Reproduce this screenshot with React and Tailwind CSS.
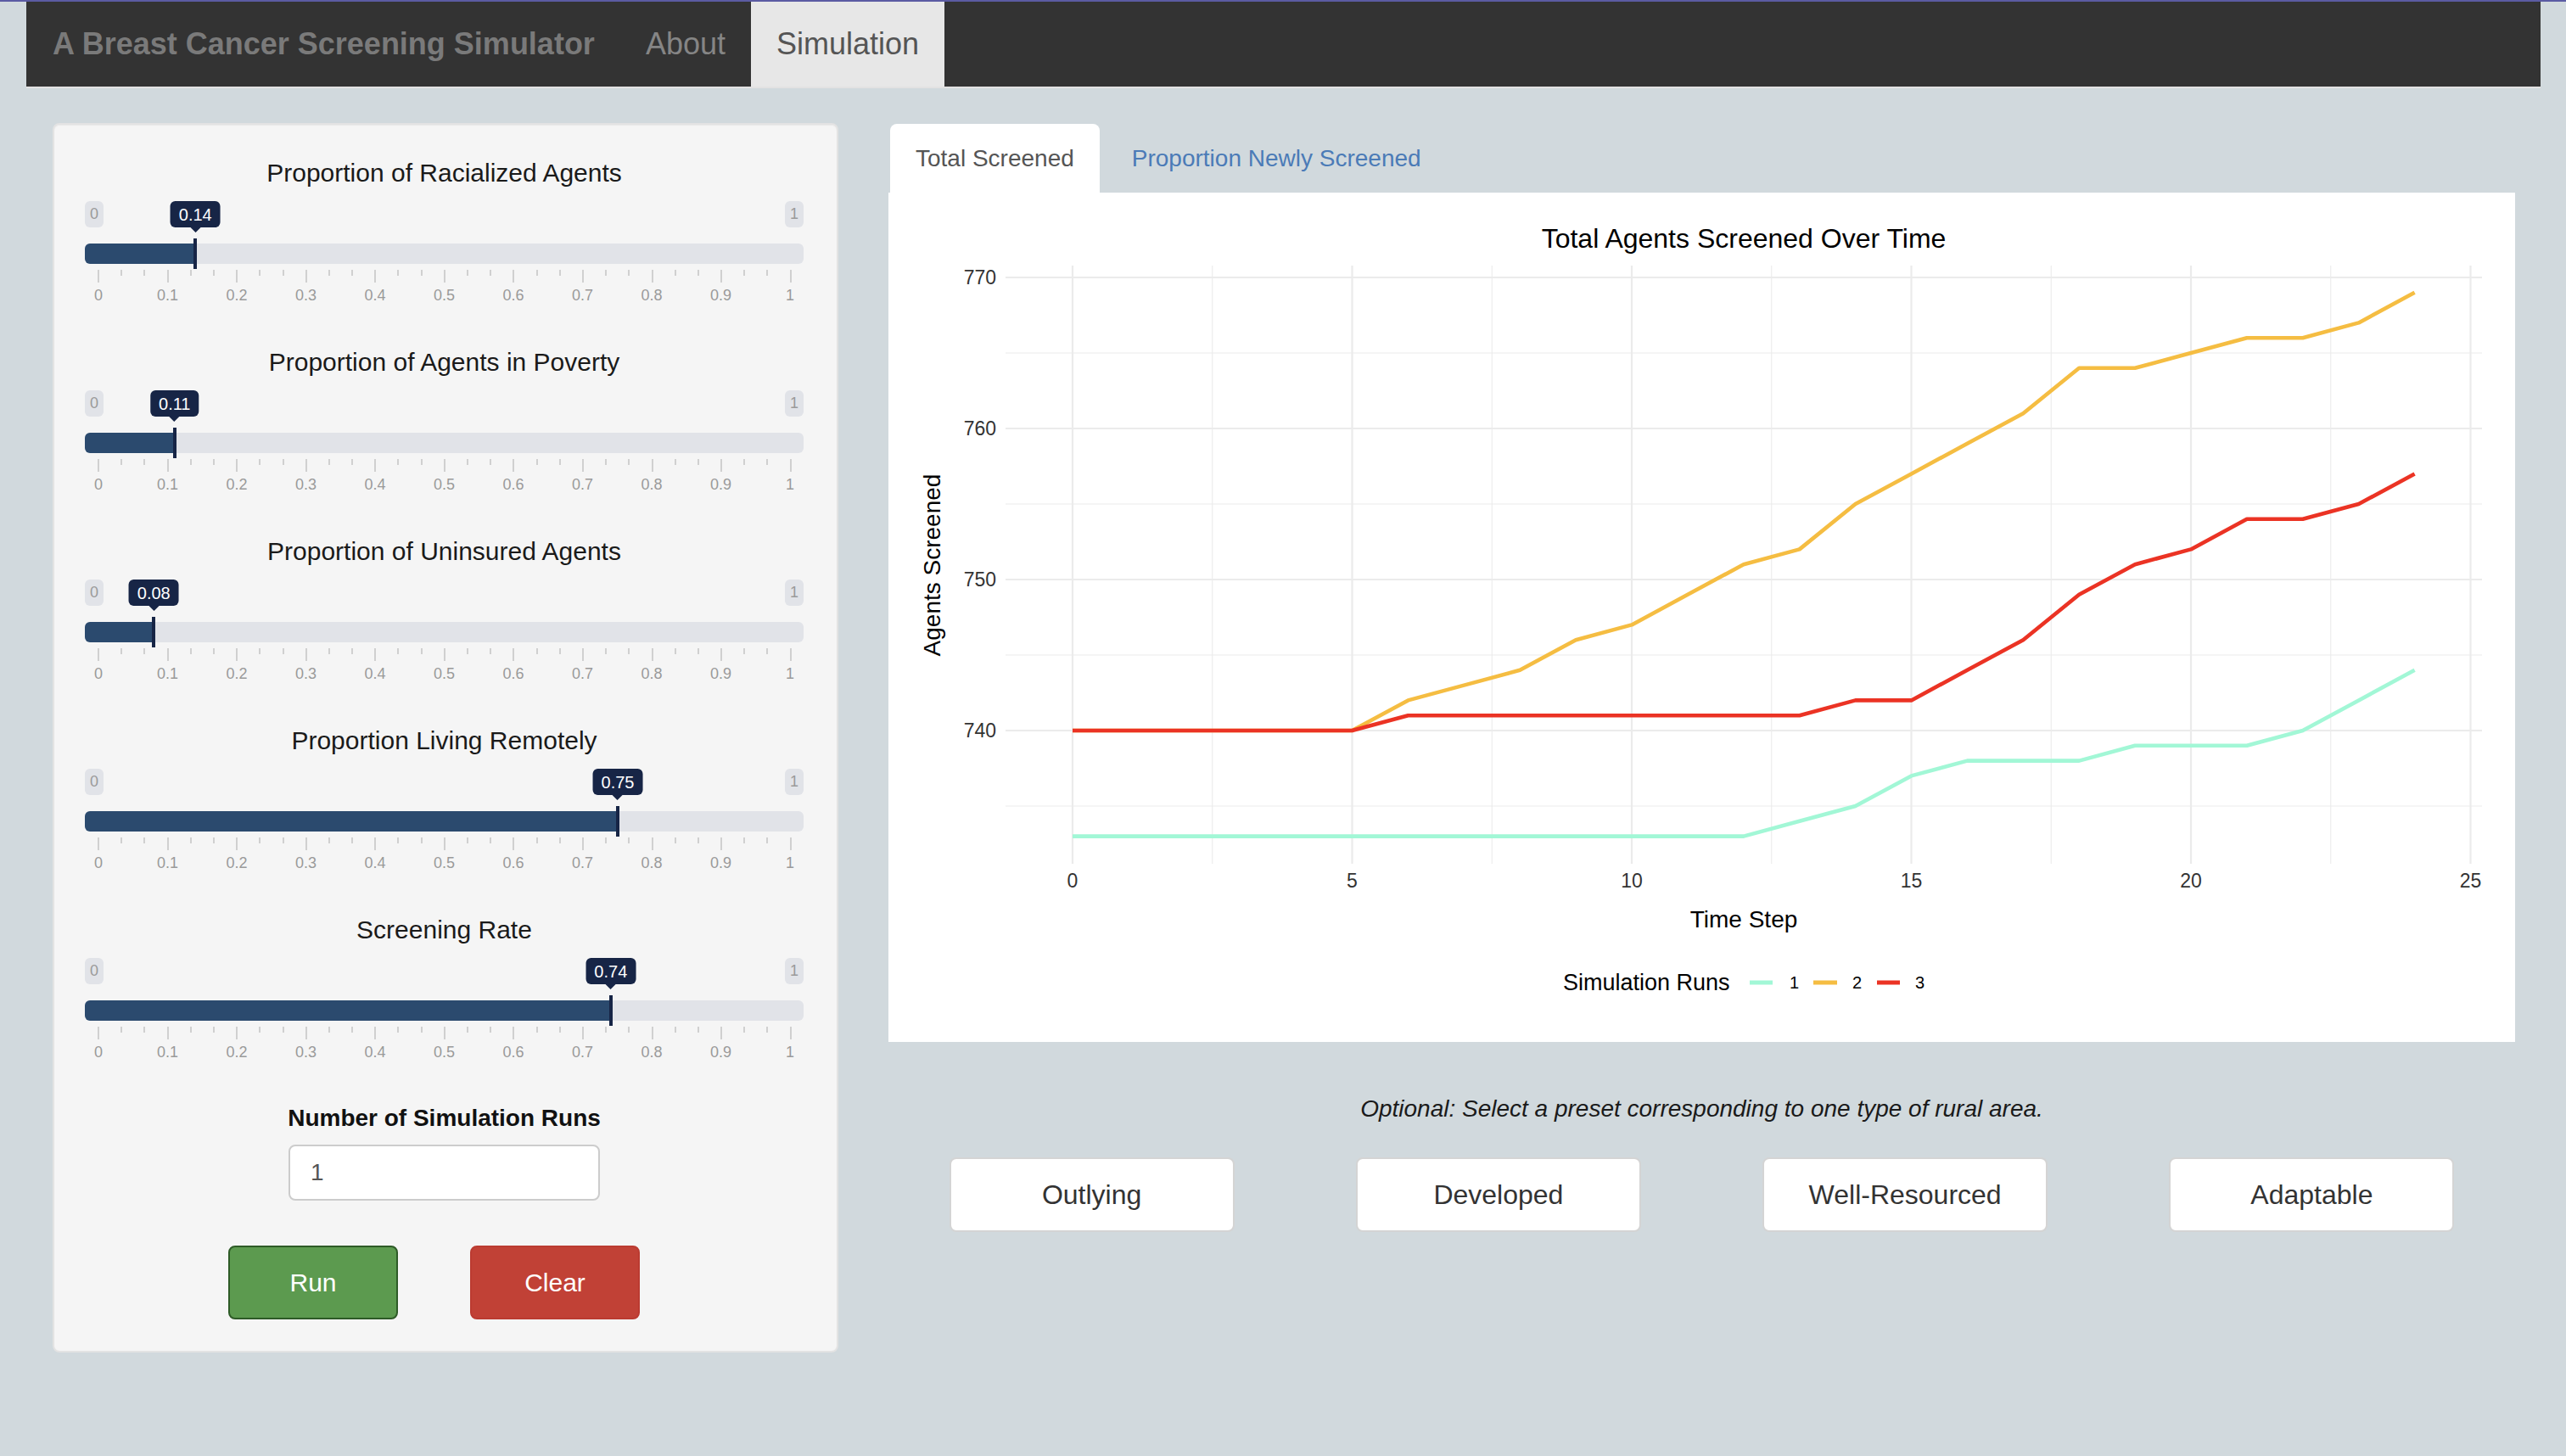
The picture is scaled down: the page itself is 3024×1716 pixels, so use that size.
import React from "react";

const sliders = [
  { title: "Proportion of Racialized Agents", value: 0.14 },
  { title: "Proportion of Agents in Poverty", value: 0.11 },
  { title: "Proportion of Uninsured Agents", value: 0.08 },
  { title: "Proportion Living Remotely", value: 0.75 },
  { title: "Screening Rate", value: 0.74 },
];

const gridLabels = ["0", "0.1", "0.2", "0.3", "0.4", "0.5", "0.6", "0.7", "0.8", "0.9", "1"];

function Slider({ title, value }) {
  const x = 16 + value * 816;
  return (
    <div className="mb-[51px]">
      <div className="text-center text-[30px] leading-[36px] text-[#1a1a1a]">{title}</div>
      <div className="relative mt-[15px] flex h-[31px] justify-between">
        <div className="flex h-[31px] items-center rounded-[6px] bg-[#e1e3e8] px-[6px] text-[18px] text-[#9a9a9a]">0</div>
        <div className="flex h-[31px] items-center rounded-[6px] bg-[#e1e3e8] px-[6px] text-[18px] text-[#9a9a9a]">1</div>
        <div
          className="absolute top-0 flex h-[31px] -translate-x-1/2 items-center rounded-[6px] bg-[#172546] px-[10px] text-[20px] text-white"
          style={{ left: x }}
        >
          {value.toFixed(2).replace(/0$/, "")}
          <div className="absolute left-1/2 top-full h-0 w-0 -translate-x-1/2 border-x-[6px] border-t-[6px] border-x-transparent border-t-[#172546]" />
        </div>
      </div>
      <div className="relative mt-[19px] h-[24px] rounded-[6px] bg-[#e1e3e8]">
        <div className="h-[24px] rounded-l-[6px] bg-[#2b4a6e]" style={{ width: x }} />
        <div className="absolute top-[-6px] h-[36px] w-[4px] bg-[#172546]" style={{ left: x - 2 }} />
      </div>
      <div className="mt-[7px] flex h-[15px] items-start justify-between pl-[15px] pr-[14px]">
        {Array.from({ length: 31 }).map((_, i) => (
          <div key={i} className={i % 3 === 0 ? "h-[15px] w-[2px] bg-[#d0d0d0]" : "h-[7px] w-[2px] bg-[#d0d0d0]"} />
        ))}
      </div>
      <div className="mt-[5px] flex h-[20px] justify-between px-[16px]">
        {gridLabels.map((l) => (
          <div key={l} className="flex w-0 justify-center">
            <span className="whitespace-nowrap text-[18px] leading-[20px] text-[#9a9a9a]">{l}</span>
          </div>
        ))}
      </div>
    </div>
  );
}

const xPos = (t) => 217 + 65.9 * t;
const yPos = (v) => 100 + (770 - v) * 17.8;

const teal = [733, 733, 733, 733, 733, 733, 733, 733, 733, 733, 733, 733, 733, 734, 735, 737, 738, 738, 738, 739, 739, 739, 740, 742, 744];
const yellow = [740, 740, 740, 740, 740, 740, 742, 743, 744, 746, 747, 749, 751, 752, 755, 757, 759, 761, 764, 764, 765, 766, 766, 767, 769];
const red = [740, 740, 740, 740, 740, 740, 741, 741, 741, 741, 741, 741, 741, 741, 742, 742, 744, 746, 749, 751, 752, 754, 754, 755, 757];

const pts = (arr) => arr.map((v, t) => `${xPos(t).toFixed(1)},${yPos(v).toFixed(1)}`).join(" ");

function Chart() {
  const majorY = [770, 760, 750, 740];
  const minorY = [765, 755, 745, 735];
  const majorX = [0, 5, 10, 15, 20, 25];
  const minorX = [2.5, 7.5, 12.5, 17.5, 22.5];
  return (
    <svg viewBox="0 0 1917 1001" className="block h-[1001px] w-full" fontFamily="'Liberation Sans', Arial, sans-serif">
      {minorY.map((v) => (
        <line key={"my" + v} x1={138} x2={1878} y1={yPos(v)} y2={yPos(v)} stroke="#ebebeb" strokeWidth={1.1} />
      ))}
      {minorX.map((t) => (
        <line key={"mx" + t} x1={xPos(t)} x2={xPos(t)} y1={86} y2={791} stroke="#ebebeb" strokeWidth={1.1} />
      ))}
      {majorY.map((v) => (
        <line key={"y" + v} x1={138} x2={1878} y1={yPos(v)} y2={yPos(v)} stroke="#ebebeb" strokeWidth={2.2} />
      ))}
      {majorX.map((t) => (
        <line key={"x" + t} x1={xPos(t)} x2={xPos(t)} y1={86} y2={791} stroke="#ebebeb" strokeWidth={2.2} />
      ))}
      <polyline points={pts(teal)} fill="none" stroke="#a2f7d6" strokeWidth={4.6} strokeLinejoin="round" />
      <polyline points={pts(yellow)} fill="none" stroke="#f5bd42" strokeWidth={4.6} strokeLinejoin="round" />
      <polyline points={pts(red)} fill="none" stroke="#eb3324" strokeWidth={4.6} strokeLinejoin="round" />
      <text x={1008} y={65} textAnchor="middle" fontSize={32} fill="#000">Total Agents Screened Over Time</text>
      {majorY.map((v) => (
        <text key={"ty" + v} x={127} y={yPos(v) + 8} textAnchor="end" fontSize={23} fill="#333">{v}</text>
      ))}
      {majorX.map((t) => (
        <text key={"tx" + t} x={xPos(t)} y={819} textAnchor="middle" fontSize={23} fill="#333">{t}</text>
      ))}
      <text x={1008} y={866} textAnchor="middle" fontSize={28} fill="#000">Time Step</text>
      <text transform="translate(61,439) rotate(-90)" textAnchor="middle" fontSize={28} fill="#000">Agents Screened</text>
      <text x={795} y={940} fontSize={27} fill="#000">Simulation Runs</text>
      <line x1={1015} x2={1042} y1={931} y2={931} stroke="#a2f7d6" strokeWidth={5} />
      <text x={1062} y={938} fontSize={20} fill="#000">1</text>
      <line x1={1090} x2={1118} y1={931} y2={931} stroke="#f5bd42" strokeWidth={5} />
      <text x={1136} y={938} fontSize={20} fill="#000">2</text>
      <line x1={1165} x2={1192} y1={931} y2={931} stroke="#eb3324" strokeWidth={5} />
      <text x={1210} y={938} fontSize={20} fill="#000">3</text>
    </svg>
  );
}

export default function App() {
  return (
    <div className="min-h-screen bg-[#d1d9dd] font-['Liberation_Sans',Arial,Helvetica,sans-serif]">
      <div className="h-[2px] bg-[#5b5ba3]" />
      <div className="pl-[31px] pr-[30px]">
        <nav className="flex h-[102px] border-b-2 border-[#e2e2e2] bg-[#333333]">
          <div className="flex items-center pl-[31px] pr-[30px] text-[36px] font-bold text-[#7a7a7a]">
            A Breast Cancer Screening Simulator
          </div>
          <div className="flex items-center px-[30px] text-[36px] text-[#858585]">About</div>
          <div className="flex items-center bg-[#e7e7e7] px-[30px] text-[36px] text-[#555555]">Simulation</div>
        </nav>
      </div>
      <div className="mt-[41px] flex gap-[59px] pl-[62px] pr-[60px]">
        <aside className="w-[926px] shrink-0 rounded-[8px] border-2 border-[#e3e3e3] bg-[#f5f5f5] pb-[37px] pl-[36px] pr-[39px] pt-[39px] shadow-[inset_0_1px_1px_rgba(0,0,0,0.05)]">
          {sliders.map((s) => (
            <Slider key={s.title} title={s.title} value={s.value} />
          ))}
          <div className="text-center text-[28px] font-bold leading-[34px] text-[#111]">Number of Simulation Runs</div>
          <div className="mt-[14px] flex justify-center">
            <div className="flex h-[66px] w-[367px] items-center rounded-[8px] border-2 border-[#cccccc] bg-white pl-[24px] text-[28px] text-[#555555]">
              1
            </div>
          </div>
          <div className="mt-[53px] flex justify-center gap-[85px] pr-[24px]">
            <button className="h-[87px] w-[200px] rounded-[8px] border-2 border-[#2e5b27] bg-[#5c9a4f] text-[30px] text-white">
              Run
            </button>
            <button className="h-[87px] w-[200px] rounded-[8px] border-2 border-[#bb3b31] bg-[#c14136] text-[30px] text-white">
              Clear
            </button>
          </div>
        </aside>
        <main className="min-w-0 flex-1 pt-[1px]">
          <div className="flex h-[81px] items-stretch">
            <div className="ml-[2px] flex items-center rounded-t-[8px] bg-white px-[30px] text-[28px] text-[#555555]">Total Screened</div>
            <div className="ml-[8px] flex items-center px-[30px] text-[28px] text-[#4b7bb7]">Proportion Newly Screened</div>
          </div>
          <div className="h-[1001px] bg-white">
            <Chart />
          </div>
          <div className="mt-[62px] text-center text-[28px] italic leading-[34px] text-[#1a1a1a]">
            Optional: Select a preset corresponding to one type of rural area.
          </div>
          <div className="mt-[40px] grid grid-cols-4 justify-items-center">
            {["Outlying", "Developed", "Well-Resourced", "Adaptable"].map((b) => (
              <button
                key={b}
                className="h-[88px] w-[336px] rounded-[8px] border-2 border-[#d4d4d4] bg-white text-[32px] text-[#333333]"
              >
                {b}
              </button>
            ))}
          </div>
        </main>
      </div>
    </div>
  );
}
